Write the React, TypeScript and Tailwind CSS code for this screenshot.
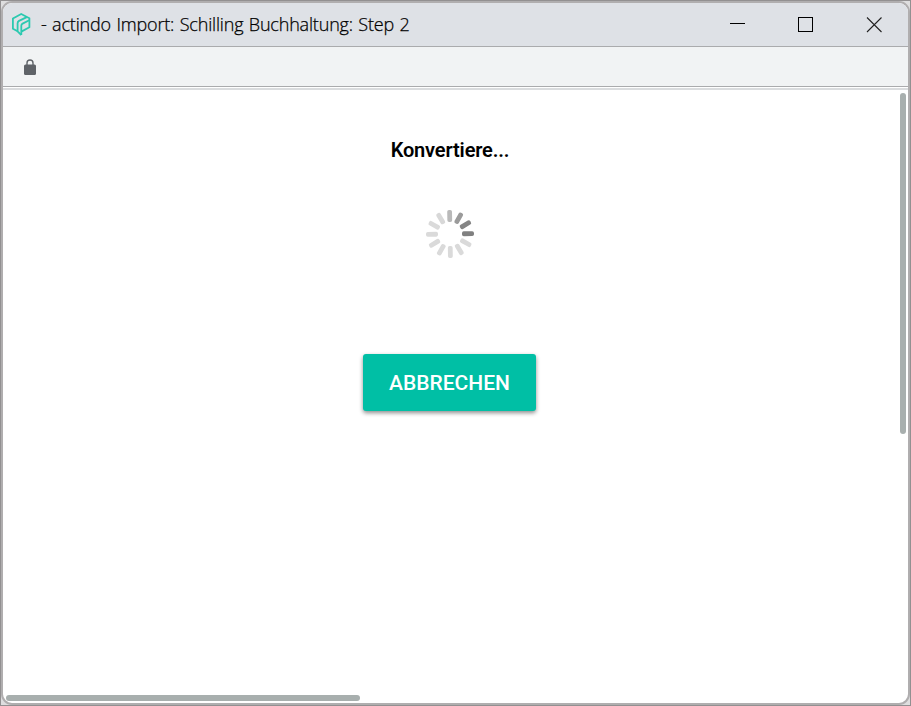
const spokes = ["#b9b9b9", "#9b9b9b", "#858585", "#808080", "#dadada", "#dadada", "#dadada", "#dadada", "#dadada", "#dadada", "#dadada", "#d8d8d8"];

function Logo() {
  return (
    <svg className="ml-[9px] block" width="19" height="24" viewBox="0 0 19 24" fill="none" stroke="#2bc9b0" strokeWidth="1.8" strokeLinejoin="round">
      <path d="M5.600 18.300 L0.900 15.700 V5.500 L9.200 1 L17.400 5.300 V14.300 L9.300 18.600" />
      <path d="M9.300 22 V12.800 Q9.300 11.300 10.600 10.600 L17.200 7.200" />
      <path d="M9.300 22 L5.600 18.300 V10.300 Q5.600 8.700 7 7.900 L14.800 4.100" />
    </svg>
  );
}

function TitleBar() {
  return (
    <header className="flex h-11 shrink-0 items-center border-b border-[#aaabad] bg-[#dee1e6]">
      <Logo />
      <h1 className="-mt-0.5 ml-2.5 whitespace-nowrap font-['Open_Sans',sans-serif] text-[18px] font-light leading-6 tracking-[-0.18px] text-black [-webkit-text-stroke:0.25px_black] [word-spacing:1px]">
        - actindo Import: Schilling Buchhaltung: Step 2
      </h1>
      <svg className="ml-auto mr-[25px] block" width="154" height="16" viewBox="0 0 154 16" fill="none" stroke="#000">
        <path d="M0.5 6.5h15" shapeRendering="crispEdges" />
        <path d="M69.5 0.5h14v14h-14z" shapeRendering="crispEdges" />
        <path d="M138 0.5l14.500 14.500M152.500 0.500L138 15" stroke="#222" strokeWidth="1.100" />
      </svg>
    </header>
  );
}

function Toolbar() {
  return (
    <div className="flex h-10 shrink-0 items-center border-b border-[#aaabad] bg-[#f1f3f4]">
      <svg className="ml-[21px] mt-0.5 block" width="13" height="17" viewBox="0 0 13 17">
        <rect x="0" y="5.500" width="12" height="10.500" rx="1.500" fill="#5f6368" />
        <path d="M3 7V4a3 3 0 0 1 6 0V7" fill="none" stroke="#5f6368" strokeWidth="1.400" />
      </svg>
    </div>
  );
}

function Spinner() {
  return (
    <svg className="mt-[47px] block" width="50" height="50" viewBox="-25 -25 50 50">
      {spokes.map((color, i) => (
        <rect key={i} x="-2.4" y="-24" width="4.8" height="12" rx="1.8" fill={color} transform={`rotate(${i * 30 - 1})`} />
      ))}
    </svg>
  );
}

export default function App() {
  return (
    <div className="h-[706px] w-[911px] overflow-hidden border border-[#929091] bg-[#dededf]">
      <div className="flex h-full w-full flex-col overflow-hidden rounded-[11px] border-2 border-[#b0aeaf] bg-white">
        <TitleBar />
        <Toolbar />
        <div className="mt-px h-0.5 shrink-0 bg-[#dadcde]" />
        <div className="flex min-h-0 flex-1">
          <div className="flex min-w-0 flex-1 flex-col">
            <main className="flex flex-1 flex-col items-center pr-1 pt-12 font-[Roboto,sans-serif]">
              <p className="ml-px text-[20px] font-semibold leading-6 tracking-[-0.15px] text-black">Konvertiere...</p>
              <Spinner />
              <button className="mt-[95px] h-[57px] w-[173px] rounded-[3px] bg-[#00bfa5] text-[21px] font-medium leading-6 text-white shadow-[0_2px_4px_rgba(0,0,0,0.45)]">
                ABBRECHEN
              </button>
            </main>
            <div className="mb-0.5 ml-[3px] h-1.5 w-[354px] shrink-0 rounded-full bg-[#a8afae]" />
          </div>
          <div className="mr-0.5 mt-[3px] h-[341px] w-1.5 shrink-0 rounded-full bg-[#a8afae]" />
        </div>
      </div>
    </div>
  );
}
